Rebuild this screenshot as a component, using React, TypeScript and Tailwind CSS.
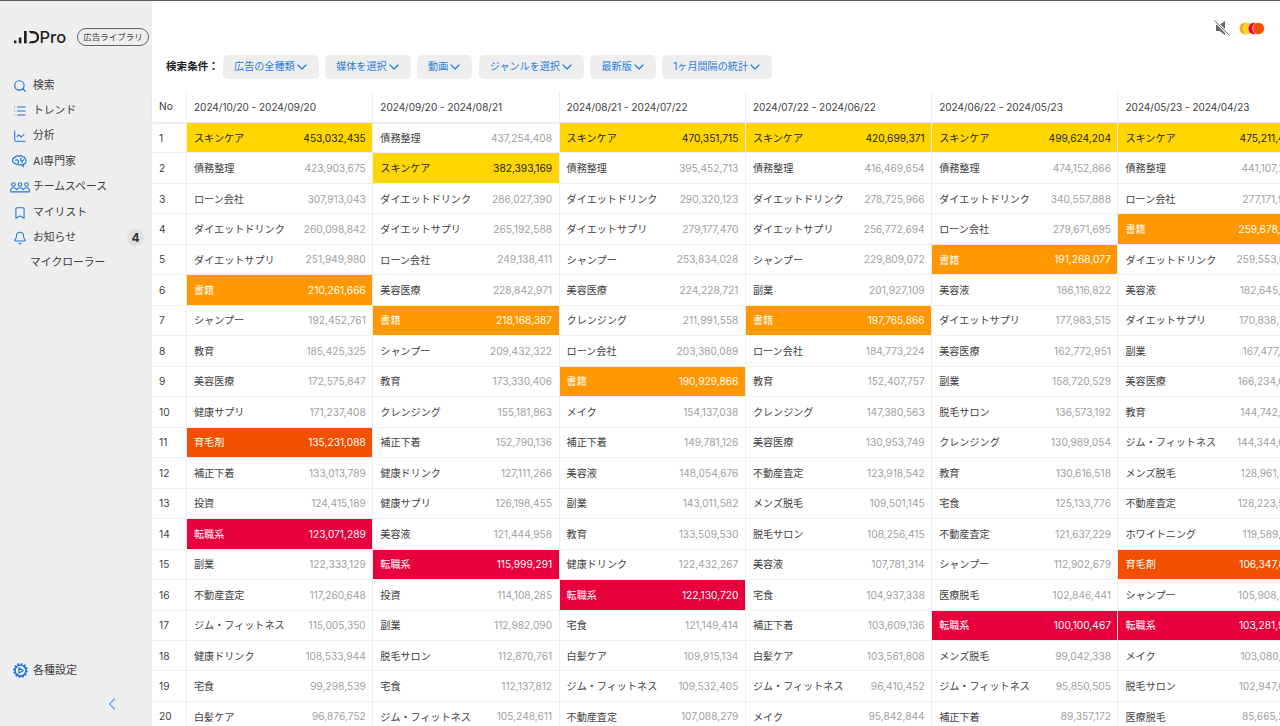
import React from "react";
import { Search, List, ChartLine, Bookmark, Bell, ChevronDown, ChevronLeft } from "lucide-react";

const FONT = "font-['Inter','Noto_Sans_CJK_JP',sans-serif]";

const headers = [
  "2024/10/20 - 2024/09/20",
  "2024/09/20 - 2024/08/21",
  "2024/08/21 - 2024/07/22",
  "2024/07/22 - 2024/06/22",
  "2024/06/22 - 2024/05/23",
  "2024/05/23 - 2024/04/23",
];

const cols: [string, string][][] = [
  [["スキンケア","453,032,435"],["債務整理","423,903,675"],["ローン会社","307,913,043"],["ダイエットドリンク","260,098,842"],["ダイエットサプリ","251,949,980"],["書籍","210,261,666"],["シャンプー","192,452,761"],["教育","185,425,325"],["美容医療","172,575,847"],["健康サプリ","171,237,408"],["育毛剤","135,231,088"],["補正下着","133,013,789"],["投資","124,415,189"],["転職系","123,071,289"],["副業","122,333,129"],["不動産査定","117,260,648"],["ジム・フィットネス","115,005,350"],["健康ドリンク","108,533,944"],["宅食","99,298,539"],["白髪ケア","96,876,752"]],
  [["債務整理","437,254,408"],["スキンケア","382,393,169"],["ダイエットドリンク","286,027,390"],["ダイエットサプリ","265,192,588"],["ローン会社","249,138,411"],["美容医療","228,842,971"],["書籍","218,168,387"],["シャンプー","209,432,322"],["教育","173,330,406"],["クレンジング","155,181,863"],["補正下着","152,790,136"],["健康ドリンク","127,111,266"],["健康サプリ","126,198,455"],["美容液","121,444,958"],["転職系","115,999,291"],["投資","114,108,285"],["副業","112,982,090"],["脱毛サロン","112,870,761"],["宅食","112,137,812"],["ジム・フィットネス","105,248,611"]],
  [["スキンケア","470,351,715"],["債務整理","395,452,713"],["ダイエットドリンク","290,320,123"],["ダイエットサプリ","279,177,470"],["シャンプー","253,834,028"],["美容医療","224,228,721"],["クレンジング","211,991,558"],["ローン会社","203,380,089"],["書籍","190,929,866"],["メイク","154,137,038"],["補正下着","149,781,126"],["美容液","148,054,676"],["副業","143,011,582"],["教育","133,509,530"],["健康ドリンク","122,432,267"],["転職系","122,130,720"],["宅食","121,149,414"],["白髪ケア","109,915,134"],["ジム・フィットネス","109,532,405"],["不動産査定","107,088,279"]],
  [["スキンケア","420,699,371"],["債務整理","416,469,654"],["ダイエットドリンク","278,725,966"],["ダイエットサプリ","256,772,694"],["シャンプー","229,809,072"],["副業","201,927,109"],["書籍","197,765,866"],["ローン会社","184,773,224"],["教育","152,407,757"],["クレンジング","147,380,563"],["美容医療","130,953,749"],["不動産査定","123,918,542"],["メンズ脱毛","109,501,145"],["脱毛サロン","108,256,415"],["美容液","107,781,314"],["宅食","104,937,338"],["補正下着","103,609,136"],["白髪ケア","103,561,808"],["ジム・フィットネス","96,410,452"],["メイク","95,842,844"]],
  [["スキンケア","499,624,204"],["債務整理","474,152,866"],["ダイエットドリンク","340,557,888"],["ローン会社","279,671,695"],["書籍","191,268,077"],["美容液","186,116,822"],["ダイエットサプリ","177,983,515"],["美容医療","162,772,951"],["副業","158,720,529"],["脱毛サロン","136,573,192"],["クレンジング","130,989,054"],["教育","130,616,518"],["宅食","125,133,776"],["不動産査定","121,637,229"],["シャンプー","112,902,679"],["医療脱毛","102,846,441"],["転職系","100,100,467"],["メンズ脱毛","99,042,338"],["ジム・フィットネス","95,850,505"],["補正下着","89,357,172"]],
  [["スキンケア","475,211,438"],["債務整理","441,107,263"],["ローン会社","277,171,904"],["書籍","259,678,412"],["ダイエットドリンク","259,553,027"],["美容液","182,645,318"],["ダイエットサプリ","170,838,726"],["副業","167,477,451"],["美容医療","166,234,092"],["教育","144,742,613"],["ジム・フィットネス","144,344,028"],["メンズ脱毛","128,961,374"],["不動産査定","128,223,590"],["ホワイトニング","119,589,146"],["育毛剤","106,347,825"],["シャンプー","105,908,273"],["転職系","103,281,964"],["メイク","103,080,517"],["脱毛サロン","102,947,638"],["医療脱毛","85,665,209"]],
];

const highlight: Record<string, string> = {
  "スキンケア": "bg-[#ffd600] text-[#222222]",
  "書籍": "bg-[#ff9800] text-white",
  "育毛剤": "bg-[#f25000] text-white",
  "転職系": "bg-[#e8003d] text-white",
};

const BLUE = "#1f77e0";

function AiIcon() {
  return (
    <svg width="16" height="13" viewBox="0 0 16 13" fill="none" stroke={BLUE} strokeWidth="1.200" strokeLinejoin="round" strokeLinecap="round">
      <path d="M3.500 2.200C4 .9 5.700.4 6.800 1.300c1-1 2.800-.8 3.500.3 1.400-.2 2.700.8 2.600 2.100 1.200.5 1.600 2 .8 3 .2 1.400-1 2.500-2.400 2.300l.3 2.300-2.700-1.700c-1 .6-2.300.3-2.900-.6-1.100.5-2.600.2-3.200-1C1.400 8.200.4 7 .7 5.700.2 4.700.8 2.500 3.500 2.200Z" />
      <path d="M3.500 5.200c.8-.6 2-.4 2.500.4M6 8c.7-.7.7-1.700 0-2.400M9 3.500c-.6.600-.6 1.600 0 2.200.8.600 1.500 1.100 1.200 2.200M11.500 5l-1.200.7" />
    </svg>
  );
}

function TeamIcon() {
  return (
    <svg width="20" height="11" viewBox="0 0 20 11" fill="none" stroke={BLUE} strokeWidth="1.100" strokeLinecap="round">
      <circle cx="3.500" cy="2.500" r="1.800" />
      <circle cx="10" cy="2.500" r="1.800" />
      <circle cx="16.500" cy="2.500" r="1.800" />
      <path d="M.6 9c0-2 1.100-3.200 2.900-3.200S6 6.500 6.800 7.600C7.600 6.500 8.500 5.800 10 5.800s2.400.7 3.200 1.800c.8-1.100 1.700-1.800 3.300-1.800 1.800 0 2.900 1.200 2.900 3.200" />
      <path d="M.6 9.900h18.800" />
    </svg>
  );
}

function GearIcon() {
  return (
    <svg width="15" height="15" viewBox="0 0 16 16" fill="none">
      <circle cx="8" cy="8" r="5.900" stroke={BLUE} strokeWidth="1.800" />
      <circle cx="8" cy="8" r="7" stroke={BLUE} strokeWidth="1.700" strokeDasharray="2 1.660" />
      <path d="M6.300 5.200 11 8l-4.700 2.800Z" stroke={BLUE} strokeWidth="1.300" strokeLinejoin="round" />
    </svg>
  );
}

function Logo() {
  return (
    <div className="flex shrink-0 items-center text-[#222222]">
      <svg width="25.500" height="14" viewBox="0 0 25.500 14" fill="#222222">
        <rect x="0" y="10.500" width="2.400" height="2.800" />
        <rect x="4.800" y="7.500" width="2.600" height="5.800" />
        <rect x="10" y="1" width="2.700" height="12.300" />
        <path d="M14.500 1h4.500a6.100 6.100 0 0 1 0 12.300h-4.500l2.300-2.400h2.200a3.750 3.750 0 0 0 0-7.500h-2.200Z" />
      </svg>
      <span className="text-[16.500px] font-medium leading-none">Pro</span>
    </div>
  );
}

function NavItem({ icon, label, badge }: { icon: React.ReactNode; label: string; badge?: string }) {
  return (
    <div className="relative flex h-[25.400px] items-center">
      <div className="flex w-[33px] shrink-0 items-center justify-center pl-[6px]">{icon}</div>
      <span className="text-[10.800px] text-[#404040]">{label}</span>
      {badge && (
        <span className="absolute right-[8px] top-[4px] flex h-[17px] w-[17px] items-center justify-center rounded-full bg-[#e0e0e0] text-[12px] font-bold text-[#333333]">
          {badge}
        </span>
      )}
    </div>
  );
}

function Filter({ label }: { label: string }) {
  return (
    <div className="flex h-[24px] shrink-0 items-center rounded-[5px] bg-[#eeeeee] pl-[11px] pr-[9px] text-[10.100px] text-[#2b7de0]">
      <span>{label}</span>
      <ChevronDown size={16} strokeWidth={1.9} className="-ml-[1px]" />
    </div>
  );
}

function Cell({ name, value }: { name: string; value: string }) {
  const hl = highlight[name];
  return (
    <div className={`flex h-full w-[186.300px] shrink-0 items-center justify-between border-r border-[#efefef] pl-[7px] pr-[6.500px] pt-[1px] text-[10.100px] ${hl ?? "text-[#404040]"}`}>
      <span>{name}</span>
      <span className={`text-[10.200px] ${hl ? "" : "text-[#a0a0a0]"}`}>{value}</span>
    </div>
  );
}

export default function App() {
  return (
    <div className={`flex h-[726px] w-[1280px] overflow-hidden border-t border-[#5a5a5a] bg-white ${FONT}`}>
      <aside className="flex h-full w-[152px] shrink-0 flex-col bg-[#eeeeee]">
        <div className="flex h-[72px] items-center gap-[11px] pl-[14px]">
          <Logo />
          <span className="flex h-[18px] shrink-0 items-center whitespace-nowrap rounded-full border border-[#666666] px-[5px] text-[8.500px] text-[#444444]">広告ライブラリ</span>
        </div>
        <nav className="flex flex-col">
          <NavItem icon={<Search size={14} strokeWidth={2} color={BLUE} />} label="検索" />
          <NavItem icon={<List size={14} strokeWidth={1.8} color={BLUE} />} label="トレンド" />
          <NavItem icon={<ChartLine size={14} strokeWidth={1.8} color={BLUE} />} label="分析" />
          <NavItem icon={<AiIcon />} label="AI専門家" />
          <NavItem icon={<TeamIcon />} label="チームスペース" />
          <NavItem icon={<Bookmark size={14} strokeWidth={1.8} color={BLUE} />} label="マイリスト" />
          <NavItem icon={<Bell size={14} strokeWidth={1.8} color={BLUE} />} label="お知らせ" badge="4" />
          <div className="flex h-[25.400px] items-center pl-[30px] text-[10.800px] text-[#404040]">マイクローラー</div>
        </nav>
        <div className="mt-auto flex h-[24px] items-center gap-[5px] pl-[13px] text-[11px] text-[#404040]">
          <GearIcon />
          <span>各種設定</span>
        </div>
        <div className="flex h-[44px] items-center justify-end pr-[30px]">
          <ChevronLeft size={20} strokeWidth={1.5} className="text-[#6aa4ee]" />
        </div>
      </aside>

      <main className="flex min-w-0 flex-1 flex-col">
        <div className="flex h-[54px] shrink-0 items-center justify-end gap-[8px] pr-[15px]">
          <svg width="18" height="18" viewBox="0 0 18 18">
            <path d="M3 6h3.500L12 2v14l-5.500-4H3Z" fill="#666666" />
            <path d="M1.500 1.500 16.500 16.500" stroke="#ffffff" strokeWidth="2.600" />
            <path d="M1.500 1.500 16.500 16.500" stroke="#666666" strokeWidth="1" />
          </svg>
          <svg width="26" height="13" viewBox="0 0 26 13">
            <circle cx="6.500" cy="6.500" r="6" fill="#ffa726" />
            <circle cx="10.500" cy="6.500" r="6" fill="#ffd600" stroke="#ffffff" strokeWidth="0.6" />
            <circle cx="15" cy="6.500" r="6" fill="#e8003d" stroke="#ffffff" strokeWidth="0.6" />
            <circle cx="19.500" cy="6.500" r="6" fill="#f25000" stroke="#ffffff" strokeWidth="0.6" />
          </svg>
        </div>
        <div className="mb-[13px] flex h-[24px] shrink-0 items-center gap-[6.500px] pl-[14px]">
          <span className="mr-[0.200px] w-[50.400px] shrink-0 whitespace-nowrap text-[10.600px] font-bold text-[#222222]">検索条件：</span>
          {["広告の全種類", "媒体を選択", "動画", "ジャンルを選択", "最新版", "1ヶ月間隔の統計"].map((l) => (
            <Filter key={l} label={l} />
          ))}
        </div>
        <div className="flex h-[31px] shrink-0 border-b border-[#e8e8e8] shadow-[0_1px_2px_rgba(0,0,0,0.08)]">
          <div className="flex w-[35px] shrink-0 items-center border-r border-[#eeeeee] pl-[7px] text-[10.200px] text-[#404040]">No</div>
          {headers.map((h) => (
            <div key={h} className="flex w-[186.300px] shrink-0 items-center border-r border-[#eeeeee] pl-[7px] text-[10px] text-[#404040]">
              {h}
            </div>
          ))}
        </div>
        <div className="flex flex-col">
          {Array.from({ length: 20 }).map((_, r) => (
            <div key={r} className="flex h-[30.470px] shrink-0 border-b border-[#efefef]">
              <div className="flex w-[35px] shrink-0 items-center border-r border-[#efefef] pl-[7px] pt-[1px] text-[10.200px] text-[#404040]">{r + 1}</div>
              {cols.map((c, i) => (
                <Cell key={i} name={c[r][0]} value={c[r][1]} />
              ))}
            </div>
          ))}
        </div>
      </main>
    </div>
  );
}
